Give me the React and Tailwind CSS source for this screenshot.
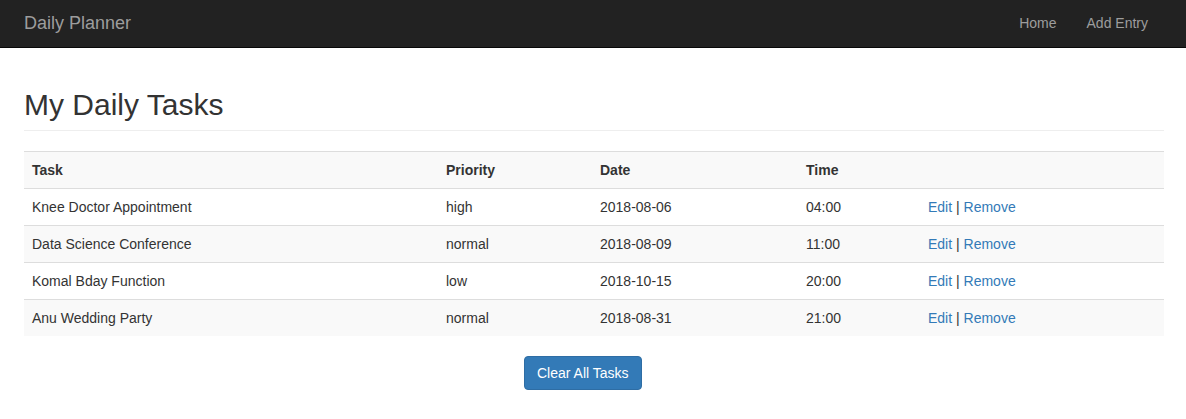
export default function App() {
  const rows = [
    ["Knee Doctor Appointment", "high", "2018-08-06", "04:00"],
    ["Data Science Conference", "normal", "2018-08-09", "11:00"],
    ["Komal Bday Function", "low", "2018-10-15", "20:00"],
    ["Anu Wedding Party", "normal", "2018-08-31", "21:00"],
  ];
  return (
    <div className="min-h-[419px] bg-white text-[14px] text-[#333] font-['Liberation_Sans',Arial,sans-serif]">
      <nav className="h-[48px] bg-[#222] border-b border-[#080808] flex items-center justify-between pl-6 pr-[23px] pb-[2px]">
        <span className="text-[18px] leading-5 text-[#9d9d9d]">Daily Planner</span>
        <div className="flex">
          <a className="px-[15px] leading-5 text-[#9d9d9d]">Home</a>
          <a className="px-[15px] leading-5 text-[#9d9d9d]">Add Entry</a>
        </div>
      </nav>
      <div className="pl-6 pr-[22px]">
        <div className="mt-[40px] pb-[9px] border-b border-[#eee]">
          <h1 className="text-[30px] leading-[33px] font-normal text-[#333]">My Daily Tasks</h1>
        </div>
        <table className="mt-5 w-full border-collapse border-t border-[#ddd]">
          <colgroup>
            <col className="w-[414px]" />
            <col className="w-[154px]" />
            <col className="w-[206px]" />
            <col className="w-[122px]" />
            <col />
          </colgroup>
          <thead>
            <tr className="bg-[#f9f9f9]">
              <th className="text-left font-bold px-2 py-2 leading-5">Task</th>
              <th className="text-left font-bold px-2 py-2 leading-5">Priority</th>
              <th className="text-left font-bold px-2 py-2 leading-5">Date</th>
              <th className="text-left font-bold px-2 py-2 leading-5">Time</th>
              <th className="px-2 py-2"></th>
            </tr>
          </thead>
          <tbody>
            {rows.map((r, i) => (
              <tr key={i} className={`border-t border-[#ddd] ${i % 2 === 1 ? "bg-[#f9f9f9]" : "bg-white"}`}>
                <td className="px-2 py-2 leading-5">{r[0]}</td>
                <td className="px-2 py-2 leading-5">{r[1]}</td>
                <td className="px-2 py-2 leading-5">{r[2]}</td>
                <td className="px-2 py-2 leading-5">{r[3]}</td>
                <td className="px-2 py-2 leading-5">
                  <a className="text-[#337ab7]">Edit</a> | <a className="text-[#337ab7]">Remove</a>
                </td>
              </tr>
            ))}
          </tbody>
        </table>
        <div className="mt-5 pl-[500px]">
          <button className="bg-[#337ab7] border border-[#2e6da4] rounded text-white px-3 py-[6px] leading-5 text-[14px]">
            Clear All Tasks
          </button>
        </div>
      </div>
    </div>
  );
}
